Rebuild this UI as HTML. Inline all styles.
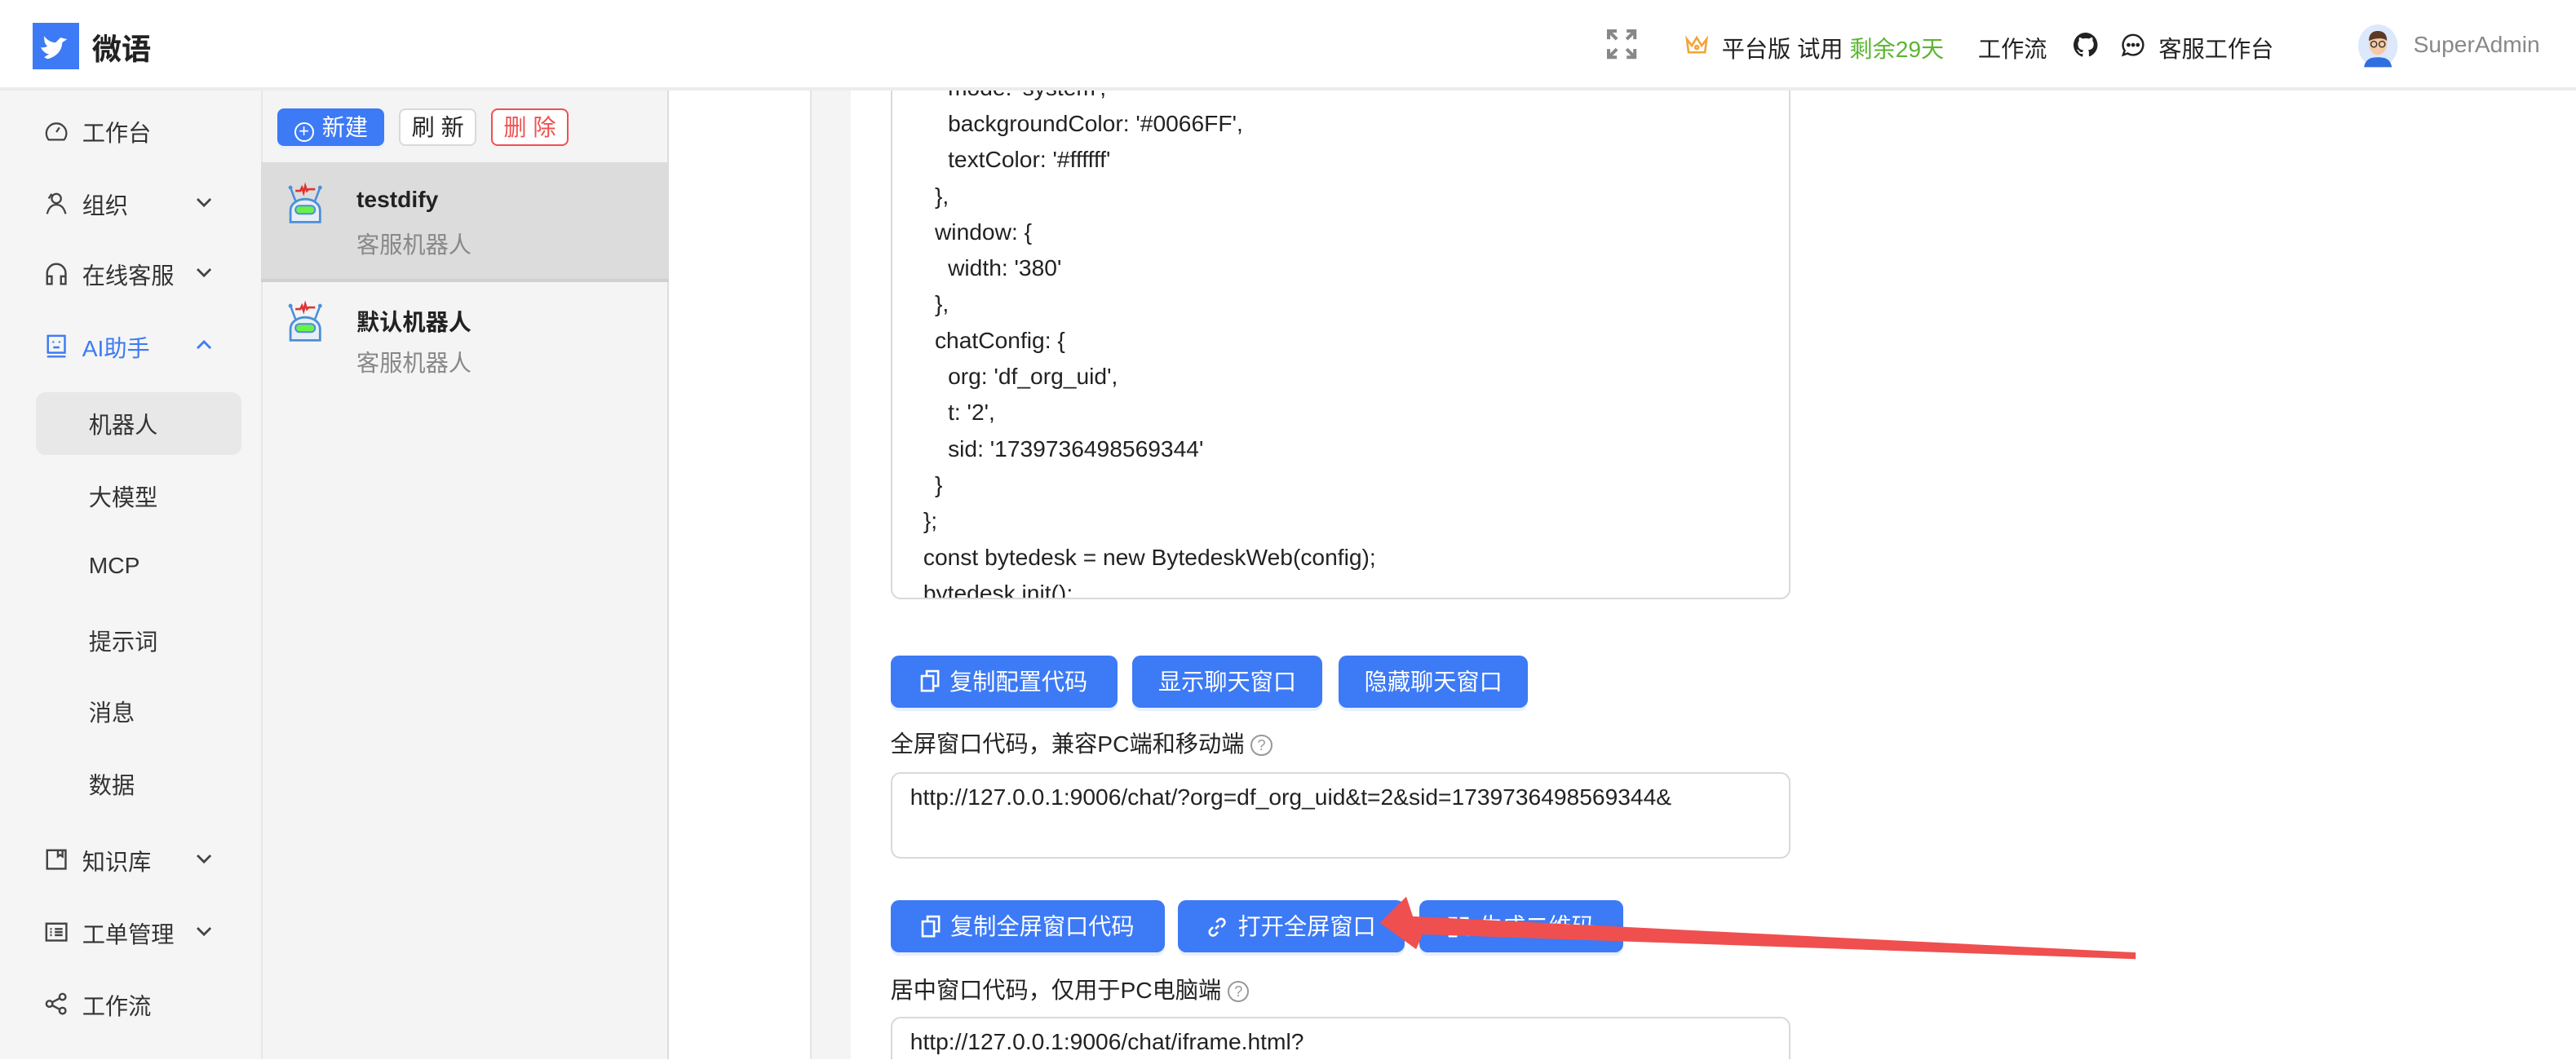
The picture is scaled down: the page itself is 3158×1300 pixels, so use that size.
<!DOCTYPE html>
<html><head><meta charset="utf-8"><style>
*{margin:0;padding:0;box-sizing:border-box}
html,body{width:3158px;height:1300px;overflow:hidden;background:#fff}
#w{zoom:2.01403;width:1568px;height:645px;position:relative;font-family:"Liberation Sans","Noto Sans CJK SC",sans-serif;color:#222;font-size:14px;overflow:hidden}
.a{position:absolute;white-space:nowrap}
.hdr{left:0;top:0;width:1568px;height:55px;background:#fff;border-bottom:2px solid #ececec}
.side{left:0;top:55px;width:159px;height:590px;background:#f5f5f5}
.list{left:159px;top:55px;width:248px;height:590px;background:#f4f4f4;border-left:1px solid #e6e6e6;border-right:1px solid #ddd}
.grey{left:493px;top:55px;width:25px;height:590px;background:#f4f4f4;border-left:1px solid #e3e3e3}
.mi{font-size:14px;color:#333}
.btn{background:#3d7af5;color:#fff;border-radius:5px;height:32px;line-height:32px;font-size:14px;text-align:center;box-shadow:0 2px 0 #e8f0ff}
.btn svg{vertical-align:-2px;margin-right:6px}
.code{left:542px;top:20px;width:548px;height:345px;border:1px solid #d9d9d9;border-radius:6px;overflow:hidden;background:#fff}
.code div{position:absolute;font-size:14px;color:#222;white-space:nowrap}
.inp{border:1px solid #d9d9d9;border-radius:6px;background:#fff}
.sub{color:#888;font-size:14px}
.q{display:inline-block;width:13px;height:13px;border:1px solid #999;border-radius:50%;font-size:9px;line-height:11px;text-align:center;color:#999;vertical-align:1px;margin-left:4px}
</style></head><body><div id="w">
<div class="a code">
<div style="left:34px;top:24px">mode: 'system',</div>
<div style="left:34px;top:46px">backgroundColor: '#0066FF',</div>
<div style="left:34px;top:68px">textColor: '#ffffff'</div>
<div style="left:26px;top:90px">},</div>
<div style="left:26px;top:112px">window: {</div>
<div style="left:34px;top:134px">width: '380'</div>
<div style="left:26px;top:156px">},</div>
<div style="left:26px;top:178px">chatConfig: {</div>
<div style="left:34px;top:200px">org: 'df_org_uid',</div>
<div style="left:34px;top:222px">t: '2',</div>
<div style="left:34px;top:244px">sid: '1739736498569344'</div>
<div style="left:26px;top:266px">}</div>
<div style="left:19px;top:288px">};</div>
<div style="left:19px;top:310px">const bytedesk = new BytedeskWeb(config);</div>
<div style="left:19px;top:332px">bytedesk.init();</div>
</div>
<div class="a hdr"></div>
<div class="a" style="left:20px;top:14px;width:28px;height:28px;background:#3d7af5"></div>
<svg class="a" style="left:20px;top:14px" width="28" height="28" viewBox="0 0 28 28"><path d="M7 8c2 3 5 4 7 4l3-3 4 1-3 2c0 5-4 9-9 10l-2-1 3-2c-2 0-4-2-5-4 2 0 3 0 4-1-2-1-2-4-2-6z" fill="#fff"/></svg>
<div class="a" style="left:56px;top:16px;font-size:18px;font-weight:bold;color:#222">微语</div>
<svg class="a" style="left:977px;top:17px" width="20" height="20" viewBox="0 0 20 20" stroke="#888" stroke-width="2" fill="none"><path d="M2 7V2h5M2 2l5 5M18 7V2h-5M18 2l-5 5M2 13v5h5M2 18l5-5M18 13v5h-5M18 18l-5-5"/></svg>
<svg class="a" style="left:1026px;top:21px" width="14" height="14" viewBox="0 0 14 14" fill="none" stroke="#f2a53a" stroke-width="1.3"><path d="M1 3l3 4 3-5 3 5 3-4-1 8H2z"/><circle cx="7" cy="8" r="1"/></svg>
<div class="a" style="left:1048px;top:19px;font-size:14px">平台版 试用 <span style="color:#5cb531">剩余29天</span></div>
<div class="a" style="left:1204px;top:19px;font-size:14px">工作流</div>
<svg class="a" style="left:1262px;top:20px" width="15" height="15" viewBox="0 0 16 16"><path fill="#222" d="M8 0a8 8 0 00-2.5 15.6c.4 0 .5-.2.5-.4v-1.5c-2.2.5-2.7-1-2.7-1-.4-.9-.9-1.2-.9-1.2-.7-.5.1-.5.1-.5.8.1 1.2.8 1.2.8.7 1.3 1.9.9 2.3.7.1-.5.3-.9.5-1.1-1.8-.2-3.6-.9-3.6-4 0-.9.3-1.6.8-2.100-.1-.2-.4-1 .1-2.1 0 0 .7-.2 2.2.8a7.4 7.4 0 014 0c1.5-1 2.2-.8 2.2-.8.4 1.1.2 1.9.1 2.1.5.6.8 1.3.8 2.1 0 3.1-1.9 3.7-3.600 3.9.3.3.5.8.5 1.5v2.2c0 .2.1.5.6.4A8 8 0 008 0z"/></svg>
<svg class="a" style="left:1291px;top:20px" width="15" height="15" viewBox="0 0 16 16" fill="none" stroke="#222" stroke-width="1.3"><path d="M8 1.5a6.5 6.5 0 11-3.5 12l-3 1 1-2.8A6.5 6.5 0 018 1.5z"/><circle cx="5" cy="8" r=".6" fill="#222"/><circle cx="8" cy="8" r=".6" fill="#222"/><circle cx="11" cy="8" r=".6" fill="#222"/></svg>
<div class="a" style="left:1314px;top:19px;font-size:14px">客服工作台</div>
<svg class="a" style="left:1435px;top:15px" width="25" height="26" viewBox="0 0 25 26"><ellipse cx="12.5" cy="13" rx="12" ry="13" fill="#dce8fb"/><path d="M4 26c1-5 4-6 8.5-6s7.5 1 8.5 6z" fill="#2f6fe0"/><ellipse cx="12.5" cy="12" rx="5.5" ry="6.5" fill="#f4c9a5"/><path d="M7 10c0-5 3-6 5.5-6S18 5 18 10c-2-2-7-2-11 0z" fill="#5a3a26"/><circle cx="10" cy="12" r="1.8" fill="none" stroke="#333" stroke-width=".7"/><circle cx="15" cy="12" r="1.8" fill="none" stroke="#333" stroke-width=".7"/></svg>
<div class="a" style="left:1469px;top:19px;font-size:14px;color:#888">SuperAdmin</div>

<div class="a side"></div>
<div class="a" style="left:22px;top:239px;width:125px;height:38px;background:#e8e8e8;border-radius:6px"></div>
<svg class="a" style="left:27px;top:72px" width="15" height="15" viewBox="0 0 16 16" fill="none" stroke="#444" stroke-width="1.2"><path d="M3 14a6.5 6.5 0 1110 0z"/><path d="M8 9l2-3"/></svg>
<div class="a mi" style="left:50px;top:70px">工作台</div>
<svg class="a" style="left:27px;top:116px" width="15" height="15" viewBox="0 0 16 16" fill="none" stroke="#444" stroke-width="1.2"><circle cx="8" cy="5" r="3"/><path d="M2 15c1-4 3-6 6-6s5 2 6 6M5 2L3 5"/></svg>
<div class="a mi" style="left:50px;top:114px">组织</div>
<svg class="a" style="left:27px;top:159px" width="15" height="15" viewBox="0 0 16 16" fill="none" stroke="#444" stroke-width="1.3"><path d="M2 12V8a6 6 0 0112 0v4M2 10h3v5H2zM11 10h3v5h-3z"/></svg>
<div class="a mi" style="left:50px;top:157px">在线客服</div>
<svg class="a" style="left:27px;top:203px" width="15" height="15" viewBox="0 0 16 16" fill="none" stroke="#3d7af5" stroke-width="1.3"><rect x="2.5" y="1.5" width="11" height="11"/><path d="M2 15h12M6 5v1M10 5v1M6 9h4"/></svg>
<div class="a mi" style="left:50px;top:201px;color:#3d7af5">AI助手</div>
<div class="a mi" style="left:54px;top:248px">机器人</div>
<div class="a mi" style="left:54px;top:292px">大模型</div>
<div class="a mi" style="left:54px;top:336px">MCP</div>
<div class="a mi" style="left:54px;top:380px">提示词</div>
<div class="a mi" style="left:54px;top:423px">消息</div>
<div class="a mi" style="left:54px;top:467px">数据</div>
<svg class="a" style="left:27px;top:516px" width="15" height="15" viewBox="0 0 16 16" fill="none" stroke="#444" stroke-width="1.3"><rect x="2" y="2" width="12" height="12"/><path d="M9 2v4l1.5-1L12 6V2"/></svg>
<div class="a mi" style="left:50px;top:514px">知识库</div>
<svg class="a" style="left:27px;top:560px" width="15" height="15" viewBox="0 0 16 16" fill="none" stroke="#444" stroke-width="1.3"><rect x="1.5" y="2.5" width="13" height="11"/><path d="M4 6h1M4 8h1M4 10h1M7 6h5M7 8h5M7 10h5"/></svg>
<div class="a mi" style="left:50px;top:558px">工单管理</div>
<svg class="a" style="left:27px;top:604px" width="15" height="15" viewBox="0 0 16 16" fill="none" stroke="#444" stroke-width="1.3"><circle cx="3.5" cy="8" r="2"/><circle cx="12" cy="3.5" r="2"/><circle cx="12" cy="12.5" r="2"/><path d="M5.3 7l4.9-2.6M5.3 9l4.9 2.6"/></svg>
<div class="a mi" style="left:50px;top:602px">工作流</div>
<svg class="a" style="left:118px;top:117px" width="12" height="12" viewBox="0 0 12 12" fill="none" stroke="#444" stroke-width="1.4"><path d="M2 4l4 4 4-4"/></svg>
<svg class="a" style="left:118px;top:160px" width="12" height="12" viewBox="0 0 12 12" fill="none" stroke="#444" stroke-width="1.4"><path d="M2 4l4 4 4-4"/></svg>
<svg class="a" style="left:118px;top:204px" width="12" height="12" viewBox="0 0 12 12" fill="none" stroke="#3d7af5" stroke-width="1.4"><path d="M2 8l4-4 4 4"/></svg>
<svg class="a" style="left:118px;top:517px" width="12" height="12" viewBox="0 0 12 12" fill="none" stroke="#444" stroke-width="1.4"><path d="M2 4l4 4 4-4"/></svg>
<svg class="a" style="left:118px;top:561px" width="12" height="12" viewBox="0 0 12 12" fill="none" stroke="#444" stroke-width="1.4"><path d="M2 4l4 4 4-4"/></svg>

<div class="a list"></div>
<div class="a" style="left:159px;top:99px;width:248px;height:73px;background:#dcdcdc;border-bottom:2px solid #d0d0d0"></div>
<div class="a btn" style="left:169px;top:66px;width:65px;height:23px;line-height:23px;border-radius:4px"><span style="display:inline-block;width:12px;height:12px;border:1.3px solid #fff;border-radius:50%;font-size:11px;line-height:9px;vertical-align:-1px;margin-right:5px">+</span>新建</div>
<div class="a" style="left:243px;top:66px;width:47px;height:23px;line-height:21px;border:1px solid #d9d9d9;border-radius:4px;background:#fff;text-align:center;font-size:14px">刷 新</div>
<div class="a" style="left:299px;top:66px;width:47px;height:23px;line-height:21px;border:1px solid #f05050;border-radius:4px;background:#fff;text-align:center;font-size:14px;color:#f05050">删 除</div>
<svg class="a" style="left:170px;top:108px" width="32" height="32" viewBox="0 0 32 32"><path d="M10 14L7 6M22 14l3-8" stroke="#4a90d9" stroke-width="1.3"/><circle cx="7" cy="6" r="1.2" fill="#4a90d9"/><circle cx="25" cy="6" r="1.2" fill="#4a90d9"/><path d="M10 8h3l1-2 1 3 1-4 1 3 1-1h4" stroke="#d33" stroke-width="1.3" fill="none"/><path d="M7 27V20c0-4 4-7 9-7s9 3 9 7v7z" fill="#e8eef6" stroke="#4a90d9" stroke-width="1.4"/><rect x="10" y="17" width="12" height="5" rx="2.5" fill="#6bf04a" stroke="#4a90d9" stroke-width="1"/></svg>
<div class="a" style="left:217px;top:113px;font-size:14px;font-weight:bold;color:#222">testdify</div>
<div class="a sub" style="left:217px;top:138px">客服机器人</div>
<svg class="a" style="left:170px;top:180px" width="32" height="32" viewBox="0 0 32 32"><path d="M10 14L7 6M22 14l3-8" stroke="#4a90d9" stroke-width="1.3"/><circle cx="7" cy="6" r="1.2" fill="#4a90d9"/><circle cx="25" cy="6" r="1.2" fill="#4a90d9"/><path d="M10 8h3l1-2 1 3 1-4 1 3 1-1h4" stroke="#d33" stroke-width="1.3" fill="none"/><path d="M7 27V20c0-4 4-7 9-7s9 3 9 7v7z" fill="#e8eef6" stroke="#4a90d9" stroke-width="1.4"/><rect x="10" y="17" width="12" height="5" rx="2.5" fill="#6bf04a" stroke="#4a90d9" stroke-width="1"/></svg>
<div class="a" style="left:217px;top:185px;font-size:14px;font-weight:bold;color:#222">默认机器人</div>
<div class="a sub" style="left:217px;top:210px">客服机器人</div>

<div class="a grey"></div>

<div class="a btn" style="left:542px;top:399px;width:138px"><svg width="12" height="14" viewBox="0 0 12 14" fill="none" stroke="#fff" stroke-width="1.3"><rect x="1" y="4" width="7" height="9"/><path d="M4 4V1h7v9H8"/></svg>复制配置代码</div>
<div class="a btn" style="left:689px;top:399px;width:116px">显示聊天窗口</div>
<div class="a btn" style="left:815px;top:399px;width:115px">隐藏聊天窗口</div>
<div class="a" style="left:542px;top:442px">全屏窗口代码，兼容PC端和移动端<span class="q">?</span></div>
<div class="a inp" style="left:542px;top:470px;width:548px;height:53px"></div>
<div class="a" style="left:554px;top:477px">http://127.0.0.1:9006/chat/?org=df_org_uid&amp;t=2&amp;sid=1739736498569344&amp;</div>
<div class="a btn" style="left:542px;top:548px;width:167px"><svg width="12" height="14" viewBox="0 0 12 14" fill="none" stroke="#fff" stroke-width="1.3"><rect x="1" y="4" width="7" height="9"/><path d="M4 4V1h7v9H8"/></svg>复制全屏窗口代码</div>
<div class="a btn" style="left:717px;top:548px;width:138px"><svg width="13" height="13" viewBox="0 0 13 13" fill="none" stroke="#fff" stroke-width="1.3"><path d="M5.5 7.5l2-2M6 3.5l1.5-1.5a2.1 2.1 0 013 3L9 6.5M7 9.5L5.5 11a2.1 2.1 0 01-3-3L4 6.5"/></svg>打开全屏窗口</div>
<div class="a btn" style="left:864px;top:548px;width:124px"><svg width="13" height="13" viewBox="0 0 13 13" fill="none" stroke="#fff" stroke-width="1.3"><rect x="1" y="1" width="4" height="4"/><rect x="8" y="1" width="4" height="4"/><rect x="1" y="8" width="4" height="4"/><path d="M8 8h4v4"/></svg>生成二维码</div>
<div class="a" style="left:542px;top:592px">居中窗口代码，仅用于PC电脑端<span class="q">?</span></div>
<div class="a inp" style="left:542px;top:619px;width:548px;height:60px"></div>
<div class="a" style="left:554px;top:626px">http://127.0.0.1:9006/chat/iframe.html?</div>
<svg class="a" style="left:0;top:0" width="1568" height="645"><polygon points="1300,580 1300,584 866,569 862,578 840,562 856,546 860,558" fill="#f04f4f"/></svg>
</div></body></html>
